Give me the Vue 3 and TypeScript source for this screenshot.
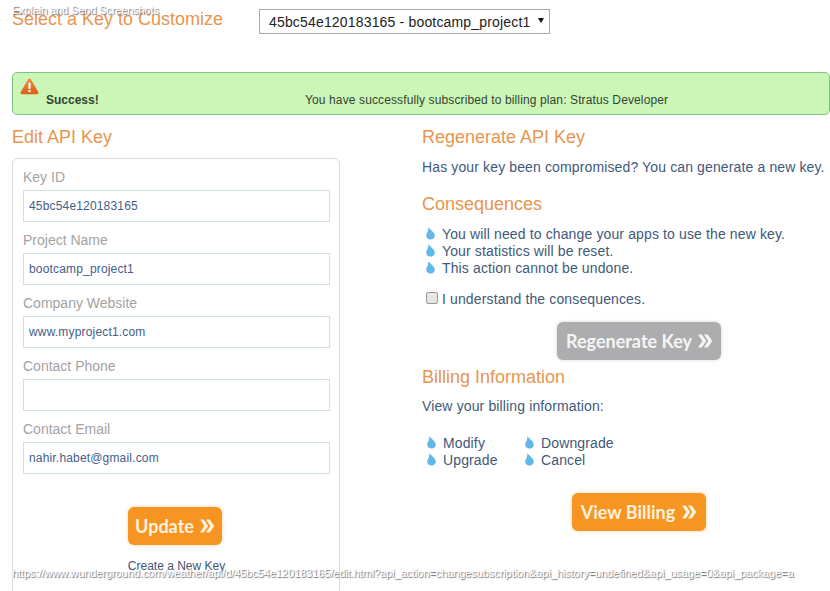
<script setup lang="ts">
interface Field { label: string; value: string }
const fields: Field[] = [
  { label: 'Key ID', value: '45bc54e120183165' },
  { label: 'Project Name', value: 'bootcamp_project1' },
  { label: 'Company Website', value: 'www.myproject1.com' },
  { label: 'Contact Phone', value: '' },
  { label: 'Contact Email', value: 'nahir.habet@gmail.com' },
]
const consequences = [
  'You will need to change your apps to use the new key.',
  'Your statistics will be reset.',
  'This action cannot be undone.',
]
const billingColumns = [['Modify', 'Upgrade'], ['Downgrade', 'Cancel']]
const dropPath = 'M2.5 0C3.5 2.5 8.8 5 8.8 8.6C8.8 11 6.8 12.6 4.5 12.6C2.1 12.6 0.2 11 0.2 8.6C0.2 6.8 1.4 5.8 1.9 4C2.2 2.8 2.4 1.4 2.5 0Z'
const chevPaths = ['M1 0.5H4.8L9.2 7L4.8 13.5H1L5.3 7Z', 'M7 0.5H10.8L15.2 7L10.8 13.5H7L11.3 7Z']
</script>

<template>
  <div class="page">
    <div class="overlay-top">Explain and Send Screenshots</div>
    <div class="overlay-url">https://www.wunderground.com/weather/api/d/45bc54e120183165/edit.html?api_action=changesubscription&amp;api_history=undefined&amp;api_usage=0&amp;api_package=a</div>

    <header class="select-row">
      <h2 class="title select-title">Select a Key to Customize</h2>
      <div class="select-box">
        <span>45bc54e120183165 - bootcamp_project1</span>
        <svg class="caret" width="6" height="5" viewBox="0 0 6 5"><path d="M0 0H6L3 5Z" fill="#111" /></svg>
      </div>
    </header>

    <section class="banner">
      <svg class="warn" width="19" height="17" viewBox="0 0 19 17">
        <defs>
          <linearGradient id="warnFill" x1="0" y1="0" x2="0" y2="1">
            <stop offset="0" stop-color="#f08a3c" />
            <stop offset="1" stop-color="#d9611a" />
          </linearGradient>
        </defs>
        <path d="M9.5 0.5C10.2 0.5 10.7 0.9 11 1.5L18.3 14C18.9 15.2 18.2 16.3 17 16.3H2C0.8 16.3 0.1 15.2 0.7 14L8 1.5C8.3 0.9 8.8 0.5 9.5 0.5Z" fill="url(#warnFill)" />
        <rect x="8.4" y="4.6" width="2.2" height="6.4" rx="0.8" fill="#fff" />
        <rect x="8.4" y="12" width="2.2" height="2.2" rx="0.6" fill="#fff" />
      </svg>
      <strong class="banner-label">Success!</strong>
      <span class="banner-text">You have successfully subscribed to billing plan: Stratus Developer</span>
    </section>

    <main class="columns">
      <div class="left">
        <h2 class="title">Edit API Key</h2>
        <form class="card" @submit.prevent>
          <div v-for="f in fields" :key="f.label" class="field">
            <label class="field-label">{{ f.label }}</label>
            <input class="field-input" type="text" :value="f.value" />
          </div>
          <div class="center update-wrap">
            <button class="cta update" type="button">Update
              <svg class="chev" width="16" height="14" viewBox="0 0 16 14"><path v-for="p in chevPaths" :key="p" :d="p" fill="currentColor" /></svg>
            </button>
          </div>
          <a class="new-key">Create a New Key</a>
        </form>
      </div>

      <div class="right">
        <h2 class="title">Regenerate API Key</h2>
        <p class="lead">Has your key been compromised? You can generate a new key.</p>

        <h2 class="title consequences">Consequences</h2>
        <ul class="drops">
          <li v-for="c in consequences" :key="c">
            <svg class="drop" width="9" height="13" viewBox="0 0 9 13"><path :d="dropPath" fill="#5fb8e8" /></svg>
            {{ c }}
          </li>
        </ul>
        <label class="agree">
          <input type="checkbox" class="check" />
          <span>I understand the consequences.</span>
        </label>
        <div class="center regen-wrap">
          <button class="cta muted" type="button">Regenerate Key
            <svg class="chev" width="16" height="14" viewBox="0 0 16 14"><path v-for="p in chevPaths" :key="p" :d="p" fill="currentColor" /></svg>
          </button>
        </div>

        <h2 class="title billing">Billing Information</h2>
        <p class="view">View your billing information:</p>
        <div class="billing-lists">
          <ul v-for="(col, i) in billingColumns" :key="i" class="drops billing-col">
            <li v-for="item in col" :key="item">
              <svg class="drop" width="9" height="13" viewBox="0 0 9 13"><path :d="dropPath" fill="#5fb8e8" /></svg>
              {{ item }}
            </li>
          </ul>
        </div>
        <div class="center billing-wrap">
          <button class="cta view-cta" type="button">View Billing
            <svg class="chev" width="16" height="14" viewBox="0 0 16 14"><path v-for="p in chevPaths" :key="p" :d="p" fill="currentColor" /></svg>
          </button>
        </div>
      </div>
    </main>
  </div>
</template>

<style>
html, body { margin: 0; background: #fff; overflow: hidden; }
</style>

<style scoped>
.page {
  position: relative;
  width: 830px;
  height: 591px;
  overflow: hidden;
  background: #fff;
  font-family: "Liberation Sans", Arial, sans-serif;
  color: #41597a;
  font-size: 14px;
  letter-spacing: 0.13px;
}
.overlay-top, .overlay-url {
  position: absolute;
  left: 12px;
  z-index: 5;
  color: #fff;
  white-space: nowrap;
  text-shadow: 1px 1px 1px #666;
}
.overlay-top { top: 4px; font-size: 11px; line-height: 13px; letter-spacing: -0.13px; }
.overlay-url { top: 567px; font-size: 11px; line-height: 13px; letter-spacing: -0.08px; }
.title {
  margin: 0;
  font-size: 18px;
  line-height: 20px;
  font-weight: 400;
  color: #e8954f;
  letter-spacing: 0;
}
.select-row {
  display: flex;
  align-items: flex-start;
  height: 72px;
  padding: 9px 0 0 12px;
  box-sizing: border-box;
}
.select-title { width: 247px; flex: none; }
.select-box {
  display: flex;
  align-items: center;
  justify-content: space-between;
  width: 291px;
  height: 25px;
  box-sizing: border-box;
  padding: 0 5px 0 9px;
  border: 1px solid #aaa;
  color: #222;
  font-size: 14px;
  letter-spacing: 0.17px;
}
.caret { margin-bottom: 3px; }
.banner {
  position: relative;
  box-sizing: border-box;
  height: 43px;
  margin-left: 12px;
  background: #ccf5b8;
  border: 1px solid #7dc484;
  border-radius: 5px;
  font-size: 12px;
  color: #34452f;
  letter-spacing: 0.12px;
}
.warn { position: absolute; left: 7px; top: 5px; }
.banner-label { position: absolute; left: 33px; top: 20px; line-height: 14px; letter-spacing: 0; }
.banner-text { position: absolute; left: 292px; top: 20px; line-height: 14px; white-space: nowrap; }
.columns {
  display: flex;
  padding: 12px 0 0 12px;
}
.left { width: 328px; flex: none; }
.right { margin-left: 82px; flex: 1; min-width: 0; }
.card {
  box-sizing: border-box;
  height: 500px;
  margin-top: 11px;
  padding: 8px 9px 0 10px;
  border: 1px solid #d3e0e6;
  border-radius: 6px;
}
.field { margin-bottom: 8px; }
.field-label {
  display: block;
  height: 23px;
  line-height: 20px;
  font-size: 14px;
  color: #a3a3a3;
  letter-spacing: 0;
}
.field-input {
  display: block;
  box-sizing: border-box;
  width: 307px;
  height: 32px;
  padding: 0 5px;
  border: 1px solid #d0e0e4;
  outline: none;
  font-family: inherit;
  font-size: 12px;
  letter-spacing: 0.17px;
  color: #45608a;
}
.center { display: flex; justify-content: center; }
.update-wrap { margin-top: 33px; padding-right: 3px; }
.cta {
  display: flex;
  align-items: center;
  gap: 5px;
  box-sizing: border-box;
  height: 38px;
  padding: 0 8px 0 9px;
  border: 0;
  border-radius: 6px;
  background: #f79522;
  box-shadow: 0 0 3px 1px #fbe6cc;
  color: #fff1dc;
  font-family: Lato, sans-serif;
  font-size: 18px;
  font-weight: 700;
  letter-spacing: 0;
  white-space: nowrap;
}
.update { padding: 0 7px; }
.view-cta { padding: 0 9px; gap: 6px; }
.muted {
  background: #adacae;
  box-shadow: 0 0 3px 1px #e6e6e6;
  color: #f5f5f5;
}
.chev { flex: none; }
.new-key {
  display: block;
  margin-top: 13px;
  text-align: center;
  font-size: 12px;
  line-height: 16px;
  color: #3d5678;
  letter-spacing: 0;
}
.lead { margin: 10px 0 0; line-height: 20px; white-space: nowrap; }
.consequences { margin-top: 17px; }
.drops { list-style: none; margin: 12px 0 0; padding: 0 0 0 5px; }
.drops li {
  position: relative;
  height: 17px;
  line-height: 17px;
  padding-left: 15px;
  white-space: nowrap;
}
.drop { position: absolute; left: -1px; top: 1px; }
.agree {
  display: flex;
  align-items: center;
  margin-top: 12px;
  padding-left: 4px;
  height: 20px;
}
.check {
  appearance: none;
  box-sizing: border-box;
  width: 12px;
  height: 12px;
  margin: 0 4px 2px 0;
  background: #e6e6e6;
  border: 1px solid #9a9a9a;
  border-radius: 2px;
}
.regen-wrap { margin-top: 13px; width: 434px; }
.billing { margin-top: 7px; }
.view { margin: 11px 0 0; line-height: 17px; }
.billing-lists { display: flex; margin-top: 20px; }
.billing-col { box-sizing: border-box; margin: 0; width: 98px; padding-left: 6px; }
.billing-wrap { margin-top: 24px; width: 434px; }
</style>
